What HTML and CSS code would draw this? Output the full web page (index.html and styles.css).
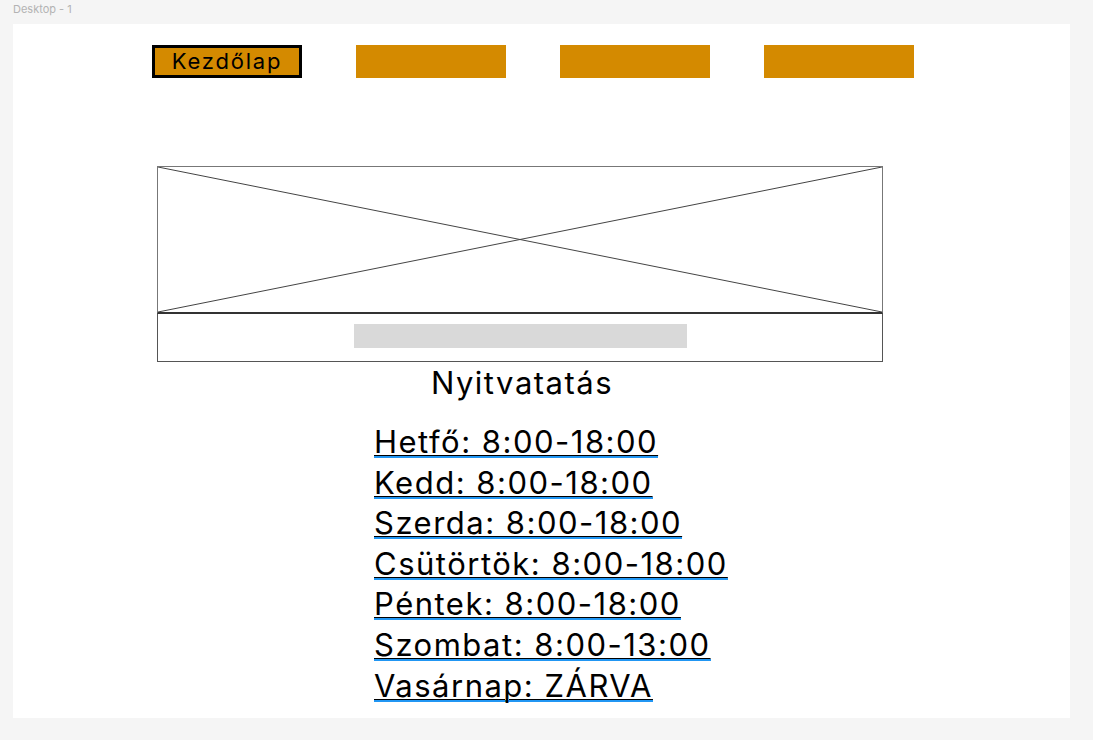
FILE: index.html
```html
<!DOCTYPE html>
<html lang="hu">
<head>
<meta charset="utf-8">
<title>Desktop - 1</title>
<link rel="stylesheet" href="styles.css">
</head>
<body>
<div class="frame-label">Desktop - 1</div>
<div class="frame">
  <nav class="nav">
    <a class="nav-btn active" href="#">Kezdőlap</a>
    <a class="nav-btn" href="#"></a>
    <a class="nav-btn" href="#"></a>
    <a class="nav-btn" href="#"></a>
  </nav>
  <section class="hero">
    <div class="hero-img">
      <svg class="hero-x" viewBox="0 0 100 100" preserveAspectRatio="none">
        <line x1="0" y1="0" x2="100" y2="100" vector-effect="non-scaling-stroke"/>
        <line x1="100" y1="0" x2="0" y2="100" vector-effect="non-scaling-stroke"/>
      </svg>
    </div>
    <div class="hero-caption"><div class="caption-bar"></div></div>
  </section>
  <h2 class="hours-title">Nyitvatatás</h2>
  <ul class="hours">
    <li><a href="#">Hetfő: 8:00-18:00</a></li>
    <li><a href="#">Kedd: 8:00-18:00</a></li>
    <li><a href="#">Szerda: 8:00-18:00</a></li>
    <li><a href="#">Csütörtök: 8:00-18:00</a></li>
    <li><a href="#">Péntek: 8:00-18:00</a></li>
    <li><a href="#">Szombat: 8:00-13:00</a></li>
    <li><a href="#">Vasárnap: ZÁRVA</a></li>
  </ul>
</div>
</body>
</html>
```
FILE: styles.css
```css
html, body {
  margin: 0;
  padding: 0;
}
body {
  background: #f5f5f5;
  font-family: Inter, "Noto Sans", sans-serif;
  color: #000;
  padding: 0 0 0 13px;
  height: 740px;
  box-sizing: border-box;
  overflow: hidden;
}
.frame-label {
  height: 24px;
  line-height: 19px;
  font-size: 11px;
  color: #b3b3b3;
}
.frame {
  width: 1057px;
  height: 694px;
  background: #fff;
  box-sizing: border-box;
  padding-top: 21px;
}
.nav {
  display: flex;
  gap: 54px;
  margin-left: 139px;
}
.nav-btn {
  display: block;
  width: 150px;
  height: 33px;
  background: #d48a00;
  box-sizing: border-box;
  color: #000;
  text-decoration: none;
  font-size: 22px;
  letter-spacing: 1.8px;
  line-height: 27px;
  text-align: center;
}
.nav-btn.active {
  border: 3px solid #000;
}
.hero {
  width: 726px;
  margin: 88px 0 0 144px;
}
.hero-img {
  height: 148px;
  border: 1px solid #777;
  border-bottom: 2px solid #333;
  box-sizing: border-box;
}
.hero-x {
  display: block;
  width: 100%;
  height: 100%;
}
.hero-x line {
  stroke: #444;
  stroke-width: 1;
}
.hero-caption {
  height: 48px;
  border: 1px solid #555;
  border-top: none;
  box-sizing: border-box;
  padding: 10px 0 0 196px;
}
.caption-bar {
  width: 333px;
  height: 24px;
  background: #d9d9d9;
}
.hours-title {
  margin: 0 0 0 144px;
  width: 730px;
  text-align: center;
  font-weight: 400;
  font-size: 31px;
  letter-spacing: 1.5px;
  line-height: 42px;
}
.hours {
  list-style: none;
  margin: 23px 0 0 361px;
  padding: 0;
}
.hours li {
  height: 40.6px;
}
.hours a {
  display: inline-block;
  color: #000;
  font-size: 31px;
  letter-spacing: 1.5px;
  line-height: 29px;
  text-decoration: underline;
  text-decoration-thickness: 1px;
  text-underline-offset: 2px;
  border-bottom: 2px solid #2196f3;
}
```
